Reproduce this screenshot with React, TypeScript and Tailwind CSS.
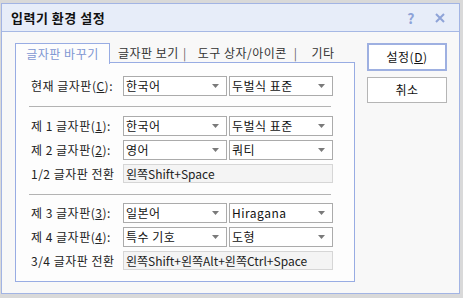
import React from 'react';

const font = "font-['Noto_Sans_CJK_KR','Noto_Sans_CJK_SC',sans-serif] tracking-[0.5px]";

function Caret() {
  return (
    <svg width="7" height="4" viewBox="0 0 7 4" className="shrink-0">
      <path d="M0 0h7L3.5 4z" fill="#7a7a7a" />
    </svg>
  );
}

function Select({ value }: { value: string }) {
  return (
    <div className="w-[104px] h-[20px] border border-[#ababab] bg-white flex items-center pl-[2px] pr-[7px] text-[12px] text-[#111]">
      <span className="flex-1 leading-none">{value}</span>
      <Caret />
    </div>
  );
}

function Label({ children }: { children: React.ReactNode }) {
  return <div className="w-[92px] shrink-0 text-[12px] text-[#222] leading-none whitespace-nowrap">{children}</div>;
}

function PairRow({ label, a, b }: { label: React.ReactNode; a: string; b: string }) {
  return (
    <div className="flex items-center">
      <Label>{label}</Label>
      <div className="flex gap-[2px]">
        <Select value={a} />
        <Select value={b} />
      </div>
    </div>
  );
}

function KeyRow({ label, value }: { label: string; value: string }) {
  return (
    <div className="flex items-center">
      <Label>{label}</Label>
      <div className="w-[210px] h-[19px] border border-[#d6d6d6] bg-[#f4f4f4] flex items-center pl-[2px] text-[12px] text-[#222] leading-none whitespace-nowrap overflow-hidden tracking-normal">
        {value}
      </div>
    </div>
  );
}

export default function App() {
  return (
    <div className={`w-[463px] h-[298px] bg-[#d9d9d9] pt-[3px] pl-[1px] ${font}`}>
      <div className="w-[459px] h-[291px] border border-[#a2b4e4] bg-[#f8f8f8] flex flex-col">
        {/* Title bar */}
        <div className="h-[28px] shrink-0 bg-[#e7edf9] border-b border-[#a6b8e4] flex items-center pl-[9px] pr-[14px]">
          <span className="flex-1 text-[13px] font-bold text-[#111] leading-none">입력기 환경 설정</span>
          <span className="text-[14px] font-bold text-[#8ea3d8] leading-none mr-[20px]">?</span>
          <svg width="10" height="10" viewBox="0 0 10 10">
            <path d="M1 1l8 8M9 1l-8 8" stroke="#8ea3d8" strokeWidth="2" />
          </svg>
        </div>

        <div className="flex pl-[13px] pt-[11px]">
          {/* Tabs + panel */}
          <div className="w-[340px] flex flex-col">
            <div className="flex h-[20px] items-stretch text-[12px] leading-none whitespace-nowrap">
              <div className="w-[95px] border-l border-t border-r border-[#98ace3] bg-[#fdfdfd] text-[#7f96d2] flex items-center justify-center relative -mb-px z-10">
                글자판 바꾸기
              </div>
              <div className="flex-1 border-b border-[#98ace3] flex items-center text-[#333] pl-[8px]">
                <span>글자판 보기</span>
                <span className="ml-[4px] mr-[11px] text-[#666]">|</span>
                <span>도구 상자/아이콘</span>
                <span className="ml-[7px] mr-[14px] text-[#666]">|</span>
                <span>기타</span>
              </div>
            </div>
            <div className="h-[219px] border-l border-r border-b border-[#98ace3] bg-[#fdfdfd] pl-[15px] pt-[13px] flex flex-col">
              <PairRow label={<>현재 글자판(<u>C</u>):</>} a="한국어" b="두벌식 표준" />
              <div className="mt-[10px] mr-[23px] ml-[-2px] h-px bg-[#b3b3b3]" />
              <div className="mt-[9px] flex flex-col gap-[4px]">
                <PairRow label={<>제 1 글자판(<u>1</u>):</>} a="한국어" b="두벌식 표준" />
                <PairRow label={<>제 2 글자판(<u>2</u>):</>} a="영어" b="쿼티" />
                <KeyRow label="1/2 글자판 전환" value="왼쪽Shift+Space" />
              </div>
              <div className="mt-[11px] mr-[23px] ml-[-2px] h-px bg-[#b3b3b3]" />
              <div className="mt-[8px] flex flex-col gap-[4px]">
                <PairRow label={<>제 3 글자판(<u>3</u>):</>} a="일본어" b="Hiragana" />
                <PairRow label={<>제 4 글자판(<u>4</u>):</>} a="특수 기호" b="도형" />
                <KeyRow label="3/4 글자판 전환" value="왼쪽Shift+왼쪽Alt+왼쪽Ctrl+Space" />
              </div>
            </div>
          </div>

          {/* Buttons */}
          <div className="ml-[12px] flex flex-col">
            <button className="w-[80px] h-[28px] border-2 border-[#9eb0e1] bg-white text-[12px] text-[#111] leading-none">
              설정(<u>D</u>)
            </button>
            <button className="mt-[6px] w-[80px] h-[26px] border border-[#b5b5b5] bg-white text-[12px] text-[#111] leading-none">
              취소
            </button>
          </div>
        </div>
      </div>
    </div>
  );
}
